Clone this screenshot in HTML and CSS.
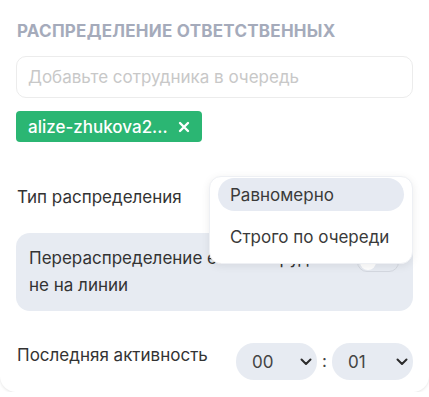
FILE: index.html
```html
<!DOCTYPE html>
<html lang="ru">

<head>
	<meta charset="UTF-8">
	<meta name="viewport" content="width=device-width, initial-scale=1.0">
	<title>Распределение ответственных</title>
	<link rel="stylesheet" href="styles.css">
</head>

<body>
	<div class="card">
		<h2 class="section-title">Распределение ответственных</h2>

		<div class="queue-input">Добавьте сотрудника в очередь</div>

		<div class="tags">
			<span class="tag">alize-zhukova2...
				<svg class="tag-close" viewBox="0 0 12 12" width="12" height="12"><path d="M2 2l8 8M10 2l-8 8" stroke="#fff" stroke-width="2.4" stroke-linecap="round"/></svg>
			</span>
		</div>

		<div class="row type-row">
			<span class="row-label">Тип распределения</span>
			<div class="dropdown">
				<div class="dropdown-item active">Равномерно</div>
				<div class="dropdown-item">Строго по очереди</div>
			</div>
		</div>

		<div class="redistribute">
			<div class="redistribute-text">Перераспределение если сотрудник не на линии</div>
			<span class="toggle"><span class="toggle-knob"></span></span>
		</div>

		<div class="row activity-row">
			<span class="row-label">Последняя активность</span>
			<div class="time">
				<div class="time-select">
					<span>00</span>
					<svg class="chevron" viewBox="0 0 12 8" width="12" height="8"><path d="M1.5 1.5 6 6l4.5-4.5" fill="none" stroke="#2b2b2b" stroke-width="2" stroke-linecap="round" stroke-linejoin="round"/></svg>
				</div>
				<span class="time-sep">:</span>
				<div class="time-select">
					<span>01</span>
					<svg class="chevron" viewBox="0 0 12 8" width="12" height="8"><path d="M1.5 1.5 6 6l4.5-4.5" fill="none" stroke="#2b2b2b" stroke-width="2" stroke-linecap="round" stroke-linejoin="round"/></svg>
				</div>
			</div>
		</div>
	</div>
</body>

</html>
```

FILE: styles.css
```css
body {
	margin: 0;
	font-family: 'Inter', 'Noto Sans', sans-serif;
	color: #333;
	background-color: #fff;
}

.card {
	height: 392px;
	box-sizing: border-box;
	padding: 22px 16px 0 16px;
	background-color: #fff;
	border-radius: 0 0 16px 16px;
	box-shadow: 0 1px 3px rgba(0, 0, 0, 0.1);
}

.section-title {
	margin: 0 0 16px 1px;
	font-size: 17px;
	font-weight: 700;
	line-height: 18px;
	text-transform: uppercase;
	color: #a5abbb;
	letter-spacing: 0.25px;
}

.queue-input {
	height: 42px;
	box-sizing: border-box;
	border: 1px solid #ececec;
	border-radius: 10px;
	padding: 0 11px;
	display: flex;
	align-items: center;
	font-size: 17px;
	color: #c8c8c8;
}

.tags {
	margin-top: 13px;
	display: flex;
}

.tag {
	display: inline-flex;
	align-items: center;
	gap: 10px;
	height: 31px;
	padding: 0 12px 0 12px;
	border-radius: 4px;
	background-color: #2bb673;
	color: #fff;
	font-size: 17px;
	font-weight: 500;
}

.row {
	display: flex;
	justify-content: space-between;
	align-items: center;
}

.row-label {
	font-size: 17px;
	padding-left: 1px;
}

.type-row {
	position: relative;
	height: 40px;
	margin-top: 36px;
}

.type-row .row-label {
	margin-top: -2px;
}

.dropdown {
	position: absolute;
	top: -2px;
	right: 0;
	z-index: 2;
	width: 204px;
	box-sizing: border-box;
	padding: 1px 8px 10px 8px;
	background-color: #fff;
	border: 1px solid #eef0f4;
	border-radius: 12px;
	box-shadow: 0 2px 8px rgba(0, 0, 0, 0.08);
}

.dropdown-item {
	height: 33px;
	display: flex;
	align-items: center;
	padding: 0 12px;
	font-size: 17px;
	color: #3a3a3a;
	border-radius: 17px;
	margin-bottom: 9px;
}

.dropdown-item:last-child {
	margin-bottom: 0;
}

.dropdown-item.active {
	background-color: #e6eaf2;
}

.redistribute {
	margin-top: 15px;
	height: 78px;
	box-sizing: border-box;
	padding: 0 14px 0 13px;
	background-color: #e7ebf2;
	border-radius: 14px;
	display: flex;
	align-items: center;
	justify-content: space-between;
}

.redistribute-text {
	width: 330px;
	font-size: 17px;
	line-height: 27px;
}

.toggle {
	width: 42px;
	height: 20px;
	box-sizing: border-box;
	border: 1px solid #d4d8e0;
	border-radius: 10px;
	background-color: #e7ebf2;
	margin-top: -20px;
	display: flex;
	align-items: center;
	padding-left: 2px;
}

.toggle-knob {
	width: 16px;
	height: 16px;
	border-radius: 50%;
	background-color: #fff;
}

.activity-row {
	margin-top: 32px;
}

.activity-row .row-label {
	margin-top: -14px;
}

.time {
	display: flex;
	align-items: center;
}

.time-select {
	width: 81px;
	height: 37px;
	box-sizing: border-box;
	padding: 0 5px 0 16px;
	border-radius: 18px;
	background-color: #e7ebf2;
	display: flex;
	align-items: center;
	justify-content: space-between;
	font-size: 17px;
	color: #444;
}

.time-sep {
	width: 15px;
	text-align: center;
	font-size: 17px;
	color: #444;
	margin-top: -1px;
}
```
